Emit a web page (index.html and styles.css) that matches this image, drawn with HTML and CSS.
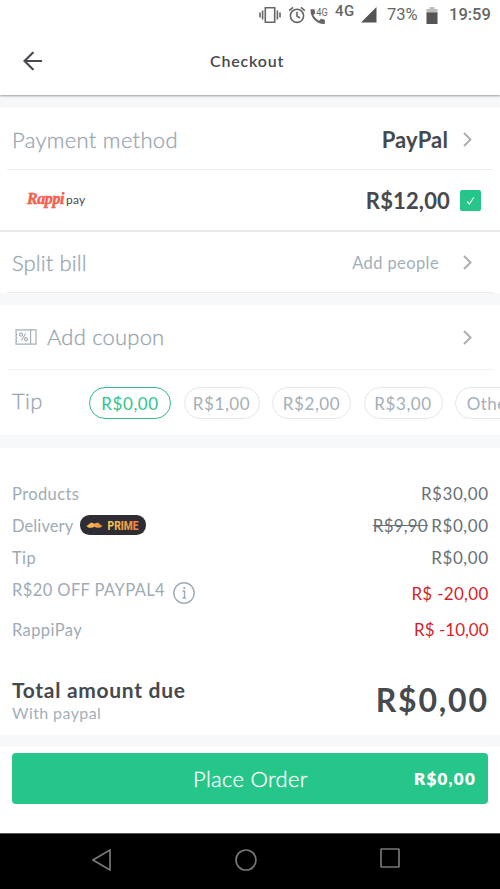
FILE: index.html
```html
<!DOCTYPE html>
<html lang="en">
<head>
<meta charset="utf-8">
<title>Checkout</title>
<link rel="stylesheet" href="styles.css">
</head>
<body>
<div class="status">
  <svg class="s-vibrate" width="22" height="18" viewBox="0 0 22 18" fill="none" stroke="#666" stroke-width="1.6"><path d="M6.300 1.800h9.400v14.400H6.300zM3.600 4.500v9M18.400 4.500v9M1 6.500v5M21 6.500v5"/></svg>
  <svg class="s-alarm" width="18" height="18" viewBox="0 0 18 18" fill="none" stroke="#666" stroke-width="1.6"><circle cx="9" cy="9.800" r="6.600"/><path d="M9 5.800v4.300l3 1.900M1.200 4.600L5 1.300M16.800 4.600L13 1.300"/></svg>
  <svg class="s-call" width="19" height="19" viewBox="0 0 19 19" fill="#666"><path d="M1.200 3.200h3.200l.9 4-1.900 1.900c1.200 2.400 3.200 4.400 5.600 5.600l1.900-1.900 4 .9V17c0 .7-.4 1-1 1C6.600 18 .5 11.500.5 4.200c0-.6.2-1 .7-1z"/><text class="svg-4g" x="6.300" y="9.500" textLength="11.500" lengthAdjust="spacingAndGlyphs">4G</text></svg>
  <span class="network">4G</span>
  <svg class="s-signal" width="16" height="16" viewBox="0 0 16 16" fill="#555"><path d="M0 15.500L15.500 0v15.500z"/></svg>
  <span class="percent">73%</span>
  <svg class="s-battery" width="12" height="17" viewBox="0 0 12 17"><path fill="#bdbdbd" d="M3.500 0h5v2h3v5H.5V2h3z"/><path fill="#555" d="M.5 5.500h11V17H.5z"/></svg>
  <span class="clock">19:59</span>
</div>
<header class="header">
  <svg width="20" height="20" viewBox="0 0 20 20" fill="none" stroke="#46494d" stroke-width="2.200" stroke-linecap="round"><path d="M1.500 10h16.700M9.800 1.800L1.500 10l8.300 8.200"/></svg>
  <h1>Checkout</h1>
</header>
<div class="strip strip-top"></div>
<section class="row payment">
  <span class="label l-payment">Payment method</span>
  <strong class="paypal">PayPal</strong>
  <svg class="chevron" viewBox="0 0 9 15"><path d="M1 1l6.500 6.500L1 14"/></svg>
</section>
<hr>
<section class="row rappi">
  <span class="rappi-logo">Rappi</span>
  <span class="pay">pay</span>
  <strong class="balance">R$12,00</strong>
  <svg class="check" width="21" height="21" viewBox="0 0 21 21"><rect width="21" height="21" rx="2" fill="#26c68a"/><path d="M7 11.400l2.400 2.600 4.300-6.500" fill="none" stroke="#fff" stroke-width="1.100"/></svg>
</section>
<hr class="full">
<section class="row split">
  <span class="label l-split">Split bill</span>
  <span class="people">Add people</span>
  <svg class="chevron" viewBox="0 0 9 15"><path d="M1 1l6.500 6.500L1 14"/></svg>
</section>
<hr>
<div class="strip"></div>
<section class="row coupon">
  <svg class="ticket" width="22" height="16" viewBox="0 0 22 16" fill="none" stroke="#a3afb8" stroke-width="1.200"><path d="M1 .8h20v14.400H1v-2.300q1.500-.8 0-1.700V9.500q1.500-.8 0-1.700V6.200q1.500-.8 0-1.700zM15.600.8v14.400M10.800 4.500l-4.600 7"/><circle cx="6" cy="5.700" r="1.500"/><circle cx="11" cy="10.200" r="1.500"/></svg>
  <span class="label l-coupon">Add coupon</span>
  <svg class="chevron" viewBox="0 0 9 15"><path d="M1 1l6.500 6.500L1 14"/></svg>
</section>
<hr class="thin">
<section class="row tip">
  <span class="label l-tip">Tip</span>
  <div class="chips">
    <span class="chip c0 active">R$0,00</span>
    <span class="chip c1">R$1,00</span>
    <span class="chip c2">R$2,00</span>
    <span class="chip c3">R$3,00</span>
    <span class="chip c4">Other</span>
  </div>
</section>
<div class="strip strip-mid"></div>
<section class="summary">
  <div class="line"><span class="name">Products</span><span class="val">R$30,00</span></div>
  <div class="line"><span class="name n-delivery">Delivery</span>
    <svg class="prime" width="66" height="20" viewBox="0 0 66 20"><defs><linearGradient id="gold" x2="1"><stop stop-color="#f8ca58"/><stop offset="1" stop-color="#f0843c"/></linearGradient></defs><rect width="66" height="20" rx="9.500" fill="#2d2d33"/><path fill="url(#gold)" d="M6.500 10.500c2 .5 2.500-2.800 5.300-2.800 1.500 0 2.200.8 2.700 1.200.5-.4 1.200-1.200 2.700-1.200 2.800 0 3.300 3.300 5.300 2.800-.6 2.500-5.500 3.300-8 .9-2.500 2.400-7.400 1.600-8-.9z"/><text x="27.500" y="14.700" fill="url(#gold)" textLength="31" lengthAdjust="spacingAndGlyphs">PRIME</text></svg>
    <span class="val"><s>R$9,90</s> R$0,00</span></div>
  <div class="line"><span class="name">Tip</span><span class="val">R$0,00</span></div>
  <div class="line promo"><span class="name">R$20 OFF PAYPAL4</span>
    <svg class="info" width="22" height="22" viewBox="0 0 22 22" fill="none" stroke="#9eabb4" stroke-width="1.400"><circle cx="11" cy="11" r="10.200"/><path d="M9.500 9h2v7M9.500 16h3.500"/><path stroke-width="1.800" d="M11.300 5v2"/></svg>
    <span class="val neg">R$ -20,00</span></div>
  <div class="line last"><span class="name">RappiPay</span><span class="val neg v10">R$ -10,00</span></div>
</section>
<section class="total">
  <div class="total-text">
    <strong class="due">Total amount due</strong>
    <span class="with">With paypal</span>
  </div>
  <strong class="amount">R$0,00</strong>
</section>
<div class="strip strip-bottom"></div>
<div class="action">
  <button type="button"><span class="place">Place Order</span><b>R$0,00</b></button>
</div>
<nav class="nav">
  <svg width="19" height="22" viewBox="0 0 19 22"><path d="M18 1v20L1 11z"/></svg>
  <svg width="22" height="22" viewBox="0 0 22 22"><circle cx="11" cy="11" r="10"/></svg>
  <svg class="square" width="20" height="20" viewBox="0 0 20 20"><rect x="1" y="1" width="18" height="18" rx=".5"/></svg>
</nav>
</body>
</html>
```
FILE: styles.css
```css
* { box-sizing: border-box; }
body { margin: 0; width: 500px; height: 889px; overflow: hidden; background: #fff; font-family: Lato, "Open Sans", sans-serif; color: #46494d; white-space: nowrap; }
svg { display: block; flex: none; }
.status { position: relative; z-index: 2; height: 30px; display: flex; align-items: center; padding-left: 259px; background: #fff; font-family: Roboto, sans-serif; color: #666; line-height: 30px; }
.s-alarm { margin-left: 7px; }
.s-call { margin-left: 4px; }
.svg-4g { font: 10px Roboto, sans-serif; }
.network { width: 20px; margin-left: 6px; font-size: 15px; font-weight: 500; padding-bottom: 9px; letter-spacing: .4px; }
.s-signal { margin-left: 6px; }
.percent { width: 31px; margin-left: 10px; font-size: 16.500px; }
.s-battery { margin-left: 8px; }
.clock { margin: 0 0 0 11px; font-size: 16.500px; font-weight: 500; }
.header { position: relative; z-index: 1; height: 65px; display: flex; align-items: center; padding: 0 0 3px 23px; background: #fff; box-shadow: 0 1px 2px rgba(0,0,0,.38); }
.header h1 { margin: 0 0 0 167px; font-size: 16px; font-weight: 600; line-height: 22px; letter-spacing: .8px; }
.strip { height: 12px; background: #f6f8fa; }
.strip-top { height: 13px; }
.strip-mid { height: 13px; }
hr { height: 1px; margin: 0 7px; border: 0; background: #eaecee; }
hr.full { height: 2px; margin: 0; background: #e9eaec; }
hr.thin { background: #eff0f2; }
.row { display: flex; align-items: center; padding-left: 12px; }
.payment { height: 61px; padding-top: 2px; }
.rappi { height: 60px; padding: 1px 0 0 27px; }
.split { height: 60px; padding-top: 1px; }
.coupon { height: 64px; }
.tip { height: 65px; overflow: hidden; }
.label { font-size: 22px; font-weight: 300; color: #98a6b0; -webkit-text-stroke: .3px #98a6b0; line-height: 28px; letter-spacing: .3px; }
.l-split { letter-spacing: .1px; }
.l-coupon { letter-spacing: .2px; }
.paypal, .balance { margin-left: auto; font-size: 22px; font-weight: 700; letter-spacing: .15px; }
.chevron { width: 9px; height: 15px; margin: 0 28px 0 15px; fill: none; stroke: #aaadb0; stroke-width: 1.900; }
.rappi-logo { width: 37px; margin-top: -3px; font: italic 700 16px/22px "Liberation Serif", serif; letter-spacing: -.4px; color: #f5604e; -webkit-text-stroke: .5px #f5604e; }
.pay { margin: -3px 0 0 2px; font-size: 12px; letter-spacing: .2px; }
.check { margin: 0 19px 0 10px; }
.people { margin-left: auto; margin-right: 9px; padding-top: 1px; font-size: 16.500px; letter-spacing: .4px; color: #a3afb8; }
.ticket { margin: 0 10px 0 3px; }
.coupon .chevron { margin-left: auto; }
.l-tip { flex: none; width: 77px; padding-bottom: 3px; }
.chips { display: flex; gap: 12.500px; }
.chip { flex: none; height: 32px; border: 1.500px solid #e5e7e9; border-radius: 16px; color: #a3afb8; font-size: 17px; line-height: 31px; text-align: center; letter-spacing: .6px; }
.c0 { width: 82px; } .c1 { width: 76px; } .c2 { width: 79px; } .c3 { width: 79px; } .c4 { width: 70px; letter-spacing: .4px; }
.chip.active { color: #31c48e; border-color: #36b98a; }
.summary { height: 213.500px; padding: 29px 12px 0; font-size: 16.500px; }
.line { display: flex; align-items: center; height: 32px; color: #9eabb4; }
.name { padding-top: 2px; letter-spacing: .4px; }
.n-delivery { letter-spacing: .1px; }
.val { margin-left: auto; margin-right: -.6px; padding-top: 1px; color: #697078; font-size: 17px; letter-spacing: .55px; }
.val s { letter-spacing: .2px; margin-right: -1.500px; }
.neg { color: #d61f2a; letter-spacing: .3px; }
.v10 { letter-spacing: 0; }
.prime { margin: -1px 0 0 7px; }
.prime text { font: 800 12.500px Roboto, sans-serif; }
.info { margin: 7px 0 0 8px; }
.promo .val { padding-top: 8px; }
.last { height: 42px; padding-top: 6px; }
.total { height: 73px; padding: 0 12px; display: flex; justify-content: space-between; }
.total-text { display: flex; flex-direction: column; padding-top: 15px; }
.due { font-size: 21px; line-height: 26px; letter-spacing: .7px; }
.with { font-size: 16px; line-height: 20px; color: #a3afb8; letter-spacing: .4px; }
.amount { font-size: 32px; line-height: 40px; padding-top: 18px; letter-spacing: 1.800px; margin-right: -.8px; }
.action { height: 86px; padding: 6.500px 12px 0; }
.action button { display: flex; align-items: center; justify-content: space-between; width: 476px; height: 51px; padding: 0 12px 0 181px; border: 0; border-radius: 4px; background: #26c68a; color: #fff; font-family: inherit; }
.place { font-size: 22px; font-weight: 300; letter-spacing: .3px; -webkit-text-stroke: .3px #fff; }
.action b { font-size: 17px; font-weight: 800; letter-spacing: 1.200px; }
.nav { height: 57px; border-top: 1px solid #555; background: #000; display: flex; align-items: center; padding: 0 100px 3px 92px; justify-content: space-between; }
.nav svg { fill: none; stroke: #777; stroke-width: 1.700; }
.nav .square { margin-bottom: 4px; }
```
